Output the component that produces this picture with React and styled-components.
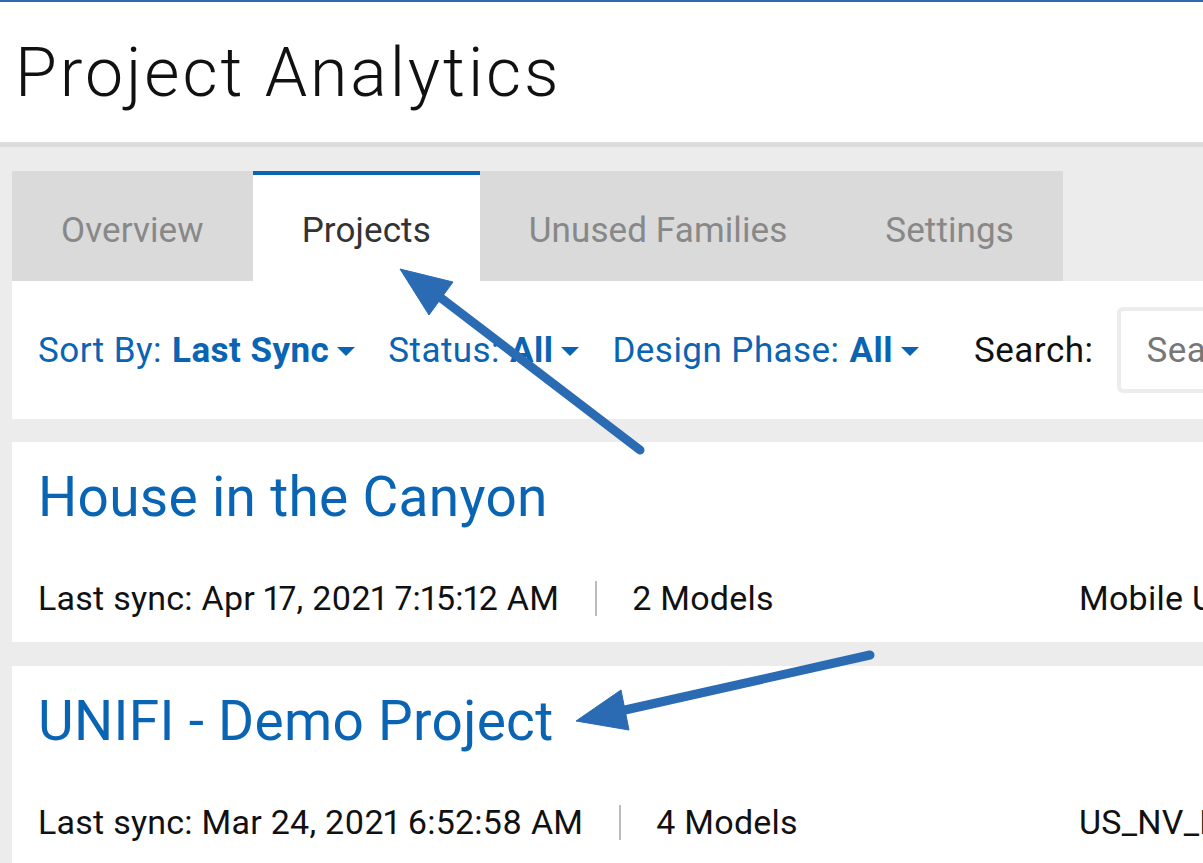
import React from 'react'
import styled, { createGlobalStyle } from 'styled-components'

const GlobalStyle = createGlobalStyle`
    html, body {
        margin: 0;
        padding: 0;
        overflow: hidden;
        background: #ececec;
    }
    body {
        font-family: Roboto, "Liberation Sans", sans-serif;
    }
`

const Page = styled.div`
    position: relative;
    width: 1203px;
    height: 863px;
    overflow: hidden;
    background: #ececec;
`
const Header = styled.header`
    background: #fff;
    border-top: 2px solid #2a6aad;
    border-bottom: 5px solid #dcdcdc;
    padding: 30px 15px 28px;
`
const PageTitle = styled.h1`
    margin: 0;
    font-size: 68px;
    line-height: 82px;
    font-weight: 300;
    color: #111;
    letter-spacing: 2.9px;
`
const Main = styled.main`
    padding: 24px 0 0 12px;
`
const Tabs = styled.nav`
    display: inline-flex;
    background: #dadada;
    height: 110px;
`
const Tab = styled.div`
    display: flex;
    align-items: center;
    padding: 4px 49px 0;
    border-top: 4px solid ${p => (p.$active ? '#0a64b4' : 'transparent')};
    background: ${p => (p.$active ? '#fff' : 'transparent')};
    color: ${p => (p.$active ? '#333' : '#888')};
    font-size: 35px;
    letter-spacing: 0.1px;
    white-space: nowrap;
`
const FilterBar = styled.div`
    display: flex;
    align-items: center;
    height: 138px;
    padding-left: 26px;
    background: #fff;
    white-space: nowrap;
    overflow: hidden;
`
const Filter = styled.div`
    display: flex;
    align-items: center;
    margin-right: ${p => p.$gap || 33}px;
    font-size: 35px;
    letter-spacing: 0.45px;
    color: #0a64b4;
    b {
        font-weight: 700;
        margin-left: 10px;
    }
`
const Caret = styled.span`
    width: 0;
    height: 0;
    margin-left: 8px;
    margin-top: 2px;
    border-left: 9px solid transparent;
    border-right: 9px solid transparent;
    border-top: 9px solid #0a64b4;
`
const SearchLabel = styled.label`
    font-size: 35px;
    letter-spacing: 0.5px;
    color: #111;
    margin-right: 24px;
`
const SearchBox = styled.input`
    flex: none;
    width: 300px;
    height: 86px;
    box-sizing: border-box;
    border: 4px solid #ececec;
    border-radius: 6px;
    padding: 0 25px;
    font-family: inherit;
    font-size: 35px;
    letter-spacing: 0.5px;
    outline: none;
    &::placeholder {
        color: #777;
    }
`
const Card = styled.section`
    margin-top: ${p => p.$first ? 23 : 24}px;
    background: #fff;
    padding: 22px 0 24px 26px;
    white-space: nowrap;
    overflow: hidden;
`
const CardTitle = styled.a`
    display: block;
    font-size: 55px;
    line-height: 66px;
    letter-spacing: 0.3px;
    color: #0a64b4;
    text-decoration: none;
    margin-bottom: 48px;
`
const Meta = styled.div`
    display: grid;
    grid-template-columns: 1041px auto;
    font-size: 34px;
    line-height: 40px;
    letter-spacing: 0.25px;
    color: #111;
    font-variant-numeric: proportional-nums;
`
const MetaLeft = styled.div`
    display: flex;
    align-items: center;
`
const Divider = styled.span`
    width: 2px;
    height: 35px;
    margin: 0 35px 0 36px;
    background: #bbb;
`
const Overlay = styled.svg`
    position: absolute;
    left: 0;
    top: 0;
    pointer-events: none;
`

const projects = [
    { name: 'House in the Canyon', sync: 'Apr 17, 2021 7:15:12 AM', models: 2, office: 'Mobile Unit' },
    { name: 'UNIFI - Demo Project', sync: 'Mar 24, 2021 6:52:58 AM', models: 4, office: 'US_NV_Las Vegas' },
]

const Arrow = ({ tail, base, tip, c1, c2 }) => (
    <g fill="#2a6bb4" stroke="#2a6bb4">
        <line x1={tail[0]} y1={tail[1]} x2={base[0]} y2={base[1]} strokeWidth="9" strokeLinecap="round" />
        <polygon points={`${tip.join(',')} ${c1.join(',')} ${c2.join(',')}`} strokeWidth="1" strokeLinejoin="round" />
    </g>
)

const App = () => {
    return (
        <Page>
            <GlobalStyle />
            <Header>
                <PageTitle>Project Analytics</PageTitle>
            </Header>
            <Main>
                <Tabs>
                    <Tab>Overview</Tab>
                    <Tab $active>Projects</Tab>
                    <Tab>Unused Families</Tab>
                    <Tab>Settings</Tab>
                </Tabs>
                <FilterBar>
                    <Filter>Sort By:<b>Last Sync</b><Caret /></Filter>
                    <Filter>Status:<b>All</b><Caret /></Filter>
                    <Filter $gap={55}>Design Phase:<b>All</b><Caret /></Filter>
                    <SearchLabel>Search:</SearchLabel>
                    <SearchBox placeholder="Search projects" />
                </FilterBar>
                {projects.map((p, i) => (
                    <Card key={p.name} $first={i === 0}>
                        <CardTitle href="#">{p.name}</CardTitle>
                        <Meta>
                            <MetaLeft>
                                <span>Last sync: {p.sync}</span>
                                <Divider />
                                <span>{p.models} Models</span>
                            </MetaLeft>
                            <span>{p.office}</span>
                        </Meta>
                    </Card>
                ))}
            </Main>
            <Overlay width="1203" height="863">
                <Arrow tail={[640, 450]} base={[441, 298]} tip={[400, 269]} c1={[453, 282]} c2={[429, 315]} />
                <Arrow tail={[870, 655]} base={[625, 710]} tip={[576, 721]} c1={[621, 690]} c2={[629, 730]} />
            </Overlay>
        </Page>
    )
}

export default App
